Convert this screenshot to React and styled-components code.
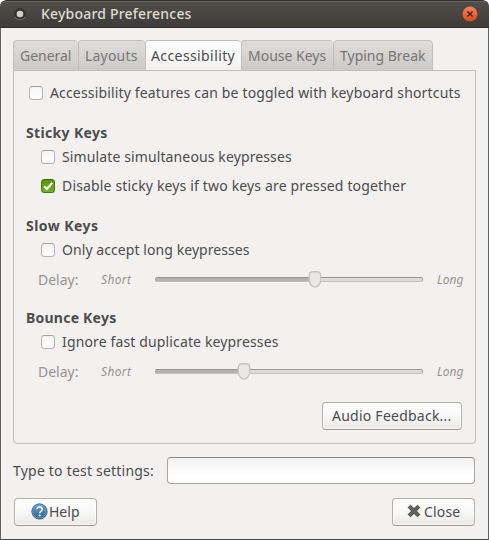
import React from 'react';
import styled, { createGlobalStyle, css } from 'styled-components';

const GlobalStyle = createGlobalStyle`
  *, *::before, *::after { box-sizing: border-box; }
  body { margin: 0; background: #fff; }
`;

const Window = styled.main`
  display: flex;
  flex-direction: column;
  width: 489px;
  height: 540px;
  overflow: hidden;
  border-radius: 6px 6px 0 0;
  background: #f2f1f0;
  color: #4c4c4c;
  font: 14px/20px "Noto Sans", "Open Sans", sans-serif;
  white-space: nowrap;
`;

const TitleBar = styled.header`
  display: flex;
  align-items: center;
  flex: none;
  height: 28px;
  padding: 0 11px 0 13px;
  border-top: 1px solid #33322e;
  border-bottom: 1px solid #33322e;
  border-radius: 6px 6px 0 0;
  background: linear-gradient(#504f4a, #3d3c38);
  box-shadow: inset 0 1px #66645e;
`;

const Title = styled.h1`
  flex: 1;
  margin: 0 0 0 14px;
  color: #dfdbd2;
  font-size: 14px;
  font-weight: 500;
  line-height: 20px;
  letter-spacing: 0.2px;
`;

const WindowClose = styled.button`
  display: flex;
  padding: 0;
  border: 0;
  background: none;
`;

const Content = styled.div`
  display: flex;
  flex-direction: column;
  flex: 1;
  padding: 12px 12px 0;
  border: solid #66615c;
  border-width: 0 1px 1px;
  border-bottom-color: #4a4844;
`;

const TabList = styled.nav`
  display: flex;
  height: 31px;
  margin-bottom: -1px;
`;

const Tab = styled.button`
  width: ${p => p.$width}px;
  height: 31px;
  padding: 0 0 0 ${p => p.$inset || 6}px;
  border: 1px solid #c0bfbd;
  border-right-width: ${p => (p.$last ? 1 : 0)}px;
  border-radius: 4px 4px 0 0;
  background: linear-gradient(#dedddc, #cbcac9);
  color: #777572;
  font: inherit;
  text-align: left;
  letter-spacing: ${p => p.$track || 0}px;
  ${p => p.$active && css`
    border-bottom-color: #f2f1f0;
    background: linear-gradient(#fefefe, #f2f1f0);
    color: #4c4c4c;
  `}
`;

const Panel = styled.section`
  display: flex;
  flex-direction: column;
  height: 374px;
  padding: 12px 13px 0 12px;
  border: 1px solid #c0bfbd;
  border-radius: 0 0 4px 4px;
`;

const Group = styled.fieldset`
  min-width: 0;
  margin: ${p => p.$gap}px 0 0;
  padding: 0;
  border: 0;
`;

const Heading = styled.h2`
  height: 20px;
  margin: 0 0 4px;
  font-size: 14px;
  font-weight: 700;
  line-height: 20px;
  letter-spacing: ${p => p.$track}px;
`;

const Option = styled.label`
  display: flex;
  align-items: center;
  height: 20px;
  margin: ${p => p.$gap || 0}px 0 0 ${p => p.$indent}px;
  letter-spacing: ${p => p.$track}px;
`;

const Box = styled.span`
  display: flex;
  width: 14px;
  height: 14px;
  margin-right: 7px;
  border: 1px solid ${p => (p.$checked ? '#4b7a08' : '#b6b4b1')};
  border-top-color: ${p => (p.$checked ? '#3f6a04' : '#a19f9b')};
  border-radius: 3.5px;
  background: ${p => (p.$checked ? 'linear-gradient(#569406, #76b32a)' : 'linear-gradient(#f4f4f4, #fff)')};
`;

const DelayRow = styled.div`
  display: flex;
  align-items: center;
  height: 20px;
  margin: 10px 0 0 12px;
  color: #96938f;

  > * { flex: none; }
`;

const DelayLabel = styled.span`
  width: 63px;
`;

const Limit = styled.em`
  width: ${p => p.$width}px;
  font-size: 12px;
  letter-spacing: ${p => p.$track}px;
`;

const Slider = styled.div`
  display: flex;
  align-items: center;
  width: 268px;
  height: 17px;
  margin: 0 14px 1px 0;
`;

const Track = styled.span`
  flex: ${p => (p.$filled ? `0 0 ${p.$width}px` : '1')};
  height: 5px;
  border: 1px solid #a9a8a6;
  border-top-color: #989795;
  border-bottom-color: #c2c1c0;
  border-radius: ${p => (p.$filled ? '2px 0 0 2px' : '0 2px 2px 0')};
  border-${p => (p.$filled ? 'right' : 'left')}: 0;
  background: ${p => (p.$filled ? '#b3b2b1' : '#dcdbda')};
`;

const Thumb = styled.svg`
  flex: none;
  width: 14px;
  height: 17px;
  margin: 0 -1px;
`;

const Button = styled.button`
  display: flex;
  align-items: center;
  width: ${p => p.$width}px;
  height: 28px;
  padding: 0 0 0 ${p => p.$inset}px;
  border: 1px solid #b3b1ae;
  border-bottom-color: #9d9b98;
  border-radius: 4px;
  background: linear-gradient(#fff, #fafafa 40%, #eae9e8);
  box-shadow: inset 0 0 0 1px #ffffff99;
  color: #4c4c4c;
  font: inherit;
  letter-spacing: ${p => p.$track || 0}px;
`;

const PanelActions = styled.div`
  display: flex;
  justify-content: flex-end;
  margin-top: 20px;
`;

const TestRow = styled.label`
  display: flex;
  align-items: center;
  justify-content: space-between;
  height: 28px;
  margin: 13px 1px 0 0;
  letter-spacing: 0.21px;
`;

const Entry = styled.input`
  align-self: flex-start;
  width: 308px;
  height: 27px;
  margin: 0;
  padding: 0 6px;
  border: 1px solid #a7a5a2;
  border-top-color: #8d8b88;
  border-radius: 4px;
  outline: 0;
  background: linear-gradient(#f2f2f2, #fff 70%);
  font: inherit;
`;

const Footer = styled.footer`
  display: flex;
  justify-content: space-between;
  margin: 13px 1px 0;
`;

const ButtonIcon = styled.svg`
  flex: none;
  margin: 0 ${p => p.$gap}px ${p => p.$lift || 0}px 0;
`;

function Check({ checked, children, ...rest }) {
  return (
    <Option {...rest}>
      <Box $checked={checked}>
        {checked && (
          <svg width="12" height="12" viewBox="0 0 12 12">
            <path d="M2.1 6.2 4.9 9 10.4 2.7" fill="none" stroke="#fff" strokeWidth="2.1" />
          </svg>
        )}
      </Box>
      {children}
    </Option>
  );
}

function Delay({ value }) {
  return (
    <DelayRow>
      <DelayLabel>Delay:</DelayLabel>
      <Limit $width={54} $track={0.35}>Short</Limit>
      <Slider>
        <Track $filled $width={value} />
        <Thumb viewBox="0 0 14 17">
          <path d="M5 .8H9C11.2 .8 12.7 2.2 12.7 4.4V9.5C12.7 12.6 9.6 16.1 7 16.1S1.3 12.6 1.3 9.5V4.4C1.3 2.2 2.8.8 5 .8Z" fill="#e8e7e6" stroke="#c6c5c3" strokeWidth="1.4" />
        </Thumb>
        <Track />
      </Slider>
      <Limit $width={27} $track={0}>Long</Limit>
    </DelayRow>
  );
}

export default function App() {
  return (
    <>
      <GlobalStyle />
      <Window>
        <TitleBar>
          <svg width="14" height="14" viewBox="0 0 14 14">
            <circle cx="7" cy="7" r="6" fill="#353430" />
            <path d="M2 10a6 6 0 0 0 10 0" fill="none" stroke="#77756f" />
            <circle cx="7" cy="7" r="3.3" fill="#d2cfc9" />
          </svg>
          <Title>Keyboard Preferences</Title>
          <WindowClose aria-label="Close window">
            <svg width="16" height="16" viewBox="0 0 16 16">
              <defs>
                <linearGradient id="close" x2="0" y2="1">
                  <stop stopColor="#f58463" /><stop offset="1" stopColor="#dd4814" />
                </linearGradient>
              </defs>
              <circle cx="8" cy="8" r="7.5" fill="url(#close)" />
              <path d="m5.4 5.4 5.2 5.2m0-5.2-5.2 5.2" stroke="#46281c" strokeWidth="1.4" />
            </svg>
          </WindowClose>
        </TitleBar>
        <Content>
          <TabList>
            <Tab $width={65} $track={-0.03}>General</Tab>
            <Tab $width={67} $track={0.2}>Layouts</Tab>
            <Tab $width={96} $track={0.4} $inset={5} $active>Accessibility</Tab>
            <Tab $width={92}>Mouse Keys</Tab>
            <Tab $width={100} $last>Typing Break</Tab>
          </TabList>
          <Panel>
            <Check $indent={3} $track={0.16}>Accessibility features can be toggled with keyboard shortcuts</Check>
            <Group $gap={20}>
              <Heading $track={0.34}>Sticky Keys</Heading>
              <Check $indent={15} $track={0.12}>Simulate simultaneous keypresses</Check>
              <Check $indent={15} $track={0.16} $gap={9} checked>Disable sticky keys if two keys are pressed together</Check>
            </Group>
            <Group $gap={20}>
              <Heading $track={0.45}>Slow Keys</Heading>
              <Check $indent={15} $track={0.07}>Only accept long keypresses</Check>
              <Delay value={154} />
            </Group>
            <Group $gap={18}>
              <Heading $track={0.23}>Bounce Keys</Heading>
              <Check $indent={15} $track={0.14}>Ignore fast duplicate keypresses</Check>
              <Delay value={83} />
            </Group>
            <PanelActions>
              <Button $width={140} $inset={9} $track={0.24}>Audio Feedback...</Button>
            </PanelActions>
          </Panel>
          <TestRow>
            Type to test settings:
            <Entry />
          </TestRow>
          <Footer>
            <Button $width={83} $inset={16}>
              <ButtonIcon $gap={1} $lift={2} width="17" height="17" viewBox="0 0 17 17">
                <defs>
                  <linearGradient id="help" x2="0" y2="1">
                    <stop stopColor="#6b9dcb" /><stop offset="1" stopColor="#286398" />
                  </linearGradient>
                </defs>
                <circle cx="8.5" cy="8.5" r="7.6" fill="url(#help)" stroke="#285e91" />
                <circle cx="8.5" cy="8.5" r="6.7" fill="none" stroke="#82add5" strokeWidth=".6" />
                <path d="M6 6.2C6.1 4.8 7.1 4 8.6 4s2.6.8 2.6 2.2c0 1.8-2.4 2-2.4 4.1" fill="none" stroke="#fff" strokeWidth="1.6" />
                <circle cx="8.7" cy="12.5" r="1.05" fill="#fff" />
              </ButtonIcon>
              Help
            </Button>
            <Button $width={83} $inset={14} $track={0.15}>
              <ButtonIcon $gap={3} $lift={2} width="14" height="14" viewBox="0 0 14 14">
                <path d="M3.5 1.3 7 4.6l3.5-3.3 2.3 2.2L9.4 7l3.4 3.5-2.3 2.2L7 9.4l-3.5 3.3-2.3-2.2L4.6 7 1.2 3.5Z" fill="#62625f" stroke="#434340" strokeLinejoin="round" />
              </ButtonIcon>
              Close
            </Button>
          </Footer>
        </Content>
      </Window>
    </>
  );
}
